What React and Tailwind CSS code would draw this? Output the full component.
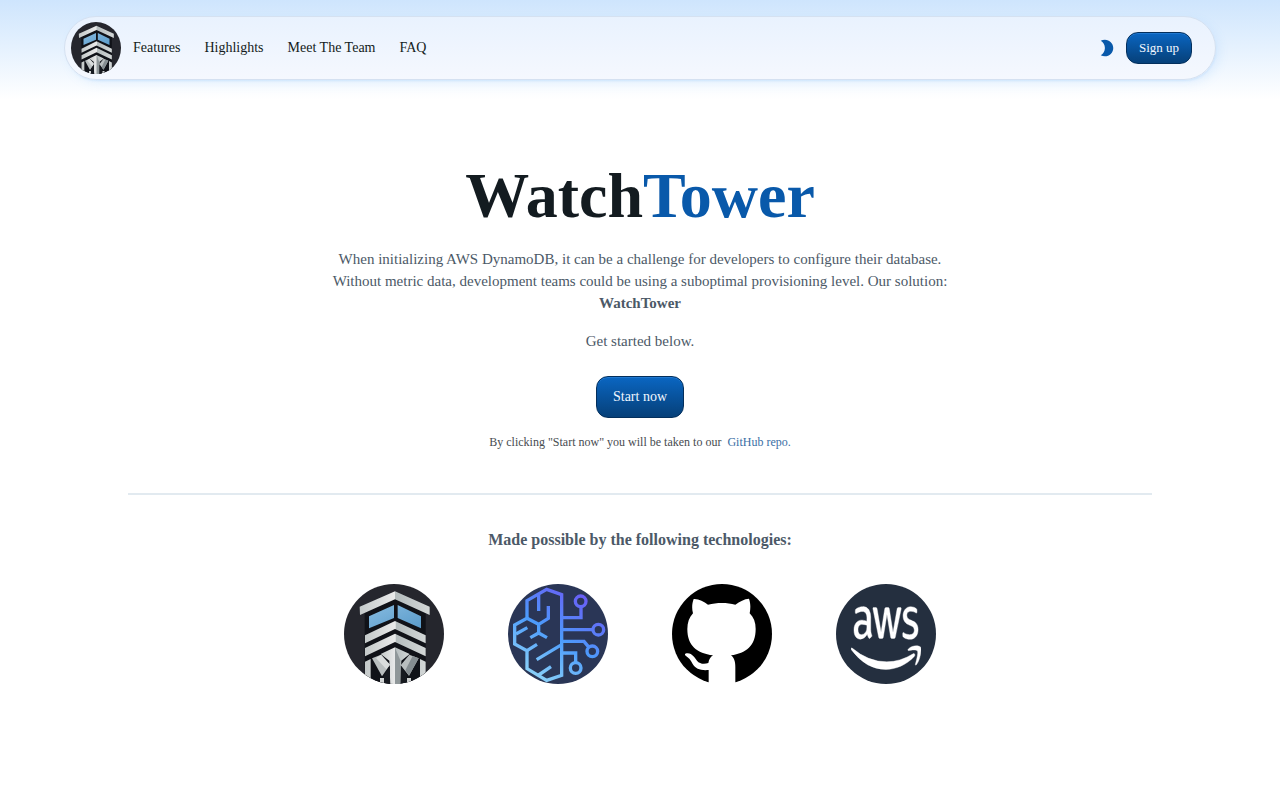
import { MdModeNight } from 'react-icons/md';
import { FaAws } from 'react-icons/fa';

const navItems = ['Features', 'Highlights', 'Meet The Team', 'FAQ'];

const TowerLogo = ({ id, className }) => (
    <svg viewBox="30 30 300 300" preserveAspectRatio="none" className={className} role="img" aria-label="WatchTower">
        <defs>
            <clipPath id={`${id}-clip`}><circle cx="180" cy="180" r="150" /></clipPath>
            <linearGradient id={`${id}-steel`} x1="0" y1="0" x2="1" y2="0">
                <stop offset="0" stopColor="#c4c9c9" />
                <stop offset="0.5" stopColor="#e9eaea" />
                <stop offset="0.51" stopColor="#b4bcbd" />
                <stop offset="1" stopColor="#d3d7d7" />
            </linearGradient>
            <linearGradient id={`${id}-glass`} x1="0" y1="0" x2="1" y2="1">
                <stop offset="0" stopColor="#86bbe0" />
                <stop offset="1" stopColor="#5a9bca" />
            </linearGradient>
        </defs>
        <g clipPath={`url(#${id}-clip)`}>
            <rect x="30" y="30" width="300" height="300" fill="#25262d" />
            <path d="M92 112 183 72l92 40v220H92z" fill="#101218" />
            <g fill={`url(#${id}-steel)`}>
                <path d="M77 98 183 52l104 46v25L183 76 78 123z" />
                <path d="M93 184l90-43 92 43v24l-92-43-90 43z" />
                <path d="M93 222l90-43 92 43v25l-92-43-90 43z" />
                <path d="M93 263l17-8v80H93zM275 263l-17-8v80h17z" />
                <path d="M140 240l43-20 44 20-25 20-3 75h-30l-3-75z" />
            </g>
            <path d="M105 127l75-34v39l-75 31zM191 93l70 34v36l-70-31z" fill={`url(#${id}-glass)`} />
            <path d="M114 253l27-11 27 30-24 35zM254 253l-28-11-26 32 25 31z" fill="#b9bebf" />
            <path d="M141 242l27 30-11 14-31-34z" fill="#dadddd" />
            <path d="M254 253l-29 52-11-16 22-43z" fill="#858d91" />
            <path d="M168 274v60h-19v-27zM200 274v60h18v-31z" fill="#171a20" />
            <path d="M183 221v112h16v-74z" fill="#8f9799" />
            <path d="M138 312h12v20h-12zM219 312h12v20h-12z" fill="#d1d4d4" />
        </g>
    </svg>
);

const BrainLogo = ({ className }) => (
    <svg viewBox="30 30 300 300" className={className} role="img" aria-label="Amazon Bedrock">
        <defs>
            <linearGradient id="brain" gradientUnits="userSpaceOnUse" x1="110" y1="320" x2="270" y2="70">
                <stop offset="0" stopColor="#8ed4f8" />
                <stop offset="0.5" stopColor="#4c9bfb" />
                <stop offset="1" stopColor="#6a5cf5" />
            </linearGradient>
        </defs>
        <circle cx="180" cy="180" r="150" fill="#2a3656" />
        <g fill="none" stroke="url(#brain)" strokeWidth="10">
            <path d="M191 62 146 46 87 80v53l-37 20v57l37 20v54l59 35 45-15z" />
            <path d="M122 62v49M87 133l35 18 29-18V96M122 149v29M97 191l25-14 25 14" />
            <path d="M54 180l34-19M87 230l30-19M116 257l75-45M122 303l37-25" />
            <path d="M191 131h58v-32M191 167h93M191 202h67l13 16M191 237h42v28" />
            <circle cx="248" cy="82" r="16" />
            <circle cx="301" cy="167" r="16" />
            <circle cx="283" cy="232" r="16" />
            <circle cx="233" cy="282" r="16" />
        </g>
    </svg>
);

const GithubLogo = ({ className }) => (
    <svg viewBox="30 30 300 300" className={className} role="img" aria-label="GitHub">
        <circle cx="180" cy="180" r="150" fill="#000" />
        <path
            d="M140 336v-48c-24 2-39-3-48-18-6-12-12-19-20-24-6-4-3-8 5-8 14 1 21 13 28 22 8 10 22 11 34 7 2-11 7-19 14-23-48-6-77-28-77-79 0-20 6-35 17-47-4-14-3-30 2-43 15-1 30 7 43 17 27-7 57-7 82 0 13-10 27-17 41-18 5 14 5 29 2 44 12 12 18 27 18 47 0 51-29 73-74 79 10 8 13 20 13 36v56z"
            fill="#fff"
        />
    </svg>
);

const Header = () => (
    <header className="px-16 pt-4">
        <div className="flex h-16 items-center justify-between rounded-full border border-[#d5e1f1] bg-linear-to-b from-[#e9f2fe] to-[#f5f8fe] pl-[6px] pr-[23px] shadow-[1px_2px_2px_-1px_rgba(85,166,246,0.15),4px_4px_12px_-2px_rgba(85,166,246,0.15)]">
            <div className="flex items-center">
                <TowerLogo id="nav" className="h-[52px] w-[50px]" />
                <nav className="ml-3 flex gap-6 text-sm text-[#131b20]">
                    {navItems.map((item) => (
                        <a key={item} href="#">{item}</a>
                    ))}
                </nav>
            </div>
            <div className="flex items-center gap-2">
                <button type="button" aria-label="Toggle theme" className="p-px text-[#0959aa]">
                    <MdModeNight size={20} />
                </button>
                <button type="button" className="h-8 rounded-xl border border-[#032f5c] bg-linear-to-b from-[#0a66c2] to-[#064079] px-3 text-[13px] text-[#f0f7ff] shadow-[inset_0_1px_rgba(85,166,246,0.3)]">
                    Sign up
                </button>
            </div>
        </div>
    </header>
);

const Hero = () => (
    <section className="flex flex-col items-center pt-20 text-center">
        <h1 className="text-[64px] leading-[72px] font-bold text-[#131b20]">
            Watch<span className="text-[#0959aa]">Tower</span>
        </h1>
        <p className="mt-4 max-w-[640px] text-[15px] leading-[22px] text-[#4c5967]">
            When initializing AWS DynamoDB, it can be a challenge for developers to configure their database.
            Without metric data, development teams could be using a suboptimal provisioning level. Our solution:{' '}
            <b>WatchTower</b>
        </p>
        <p className="mt-4 text-[15px] leading-[22px] text-[#4c5967]">Get started below.</p>
        <button type="button" className="mt-6 h-[42px] rounded-xl border border-[#032f5c] bg-linear-to-b from-[#0a66c2] to-[#064079] px-4 text-sm text-[#f0f7ff] shadow-[inset_0_1px_rgba(85,166,246,0.3)]">
            Start now
        </button>
        <p className="mt-4 text-xs text-[#474b50]">
            By clicking "Start now" you will be taken to our &nbsp;<a href="#" className="text-[#3a6ea5]">GitHub repo.</a>
        </p>
    </section>
);

const Technologies = () => (
    <section className="mx-32 mt-[43px] border-t-2 border-[#e2eaf0] pt-[33px] text-center">
        <h2 className="text-base leading-6 font-bold text-[#4c5967]">Made possible by the following technologies:</h2>
        <div className="mt-8 flex justify-center gap-16">
            <TowerLogo id="tech" className="size-[100px]" />
            <BrainLogo className="size-[100px]" />
            <GithubLogo className="size-[100px]" />
            <div className="flex size-[100px] items-center justify-center rounded-full bg-[#242f3f]">
                <FaAws viewBox="0 60 640 392" preserveAspectRatio="none" strokeWidth="3" stroke="currentColor" aria-label="AWS" className="mt-2 h-16 w-[70px] text-white" />
            </div>
        </div>
    </section>
);

const App = () => {
    return (
        <div className="min-h-screen bg-white bg-[linear-gradient(#cee5fd,#fff)] bg-[length:100%_100px] bg-no-repeat font-['Liberation_Serif',serif]">
            <Header />
            <main>
                <Hero />
                <Technologies />
            </main>
        </div>
    );
};

export default App;
